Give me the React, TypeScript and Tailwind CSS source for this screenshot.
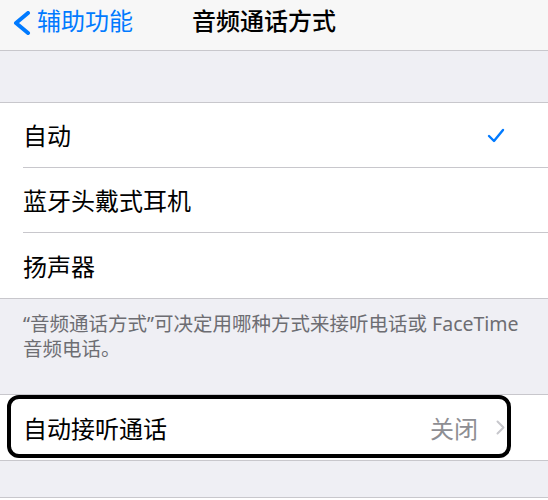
import React from 'react';

const font = { fontFamily: '"Noto Sans CJK SC", "Noto Sans", sans-serif' };
const footerFont = { fontFamily: '"Noto Sans", "Noto Sans CJK SC", sans-serif' };

const Check = () => (
  <svg width="18" height="15" viewBox="0 0 18 15" fill="none">
    <path d="M2 8 L7 13 L16 2" stroke="#007aff" strokeWidth="2.4" strokeLinecap="round" strokeLinejoin="round" />
  </svg>
);

const App: React.FC = () => {
  const options = [
    { label: '自动', checked: true },
    { label: '蓝牙头戴式耳机', checked: false },
    { label: '扬声器', checked: false },
  ];

  return (
    <div className="w-[548px] h-[500px] overflow-hidden bg-[#efeff4]" style={font}>
      {/* Nav bar */}
      <div className="h-[51px] bg-[#f7f7f7] border-b border-[#c8c7cc] flex items-start pt-[5px] pl-[12px]">
        <div className="flex items-center text-[#007aff]">
          <svg className="mt-[6px]" width="20" height="24" viewBox="0 0 20 24" fill="none">
            <path d="M16 2 L4 12 L16 22" stroke="#007aff" strokeWidth="4" strokeLinecap="round" strokeLinejoin="round" />
          </svg>
          <span className="ml-[5px] text-[24px] leading-[30px]">辅助功能</span>
        </div>
        <div className="ml-[59px] text-[24px] leading-[30px] text-black font-medium">音频通话方式</div>
      </div>

      <div className="h-[51px]" />

      {/* Options */}
      <div className="bg-white border-y border-[#c8c7cc]">
        {options.map((o, i) => (
          <div key={o.label} className="pl-[23px]">
            <div
              className={`h-[65px] flex items-center justify-between pr-[43px] ${
                i < options.length - 1 ? 'border-b border-[#c8c7cc]' : ''
              }`}
            >
              <span className="text-[24px] text-black">{o.label}</span>
              {o.checked && <Check />}
            </div>
          </div>
        ))}
      </div>

      {/* Footer */}
      <div className="pl-[23px] pr-[16px] pt-[12px] h-[95px] text-[19.5px] leading-[25px] text-[#6d6d72]" style={footerFont}>
        “音频通话方式”可决定用哪种方式来接听电话或 FaceTime 音频电话。
      </div>

      {/* Auto answer */}
      <div className="relative bg-white border-y border-[#c8c7cc]">
        <div className="h-[65px] flex items-center justify-between pl-[23px] pr-[43px]">
          <span className="text-[24px] text-black">自动接听通话</span>
          <div className="flex items-center">
            <span className="text-[24px] text-[#8e8e93]">关闭</span>
            <svg className="ml-[18px]" width="9" height="15" viewBox="0 0 9 15" fill="none">
              <path d="M1.5 1.5 L7.5 7.5 L1.5 13.5" stroke="#c7c7cc" strokeWidth="2" strokeLinecap="round" strokeLinejoin="round" />
            </svg>
          </div>
        </div>
        <div className="absolute left-[7px] top-0 w-[504px] h-[63px] border-[4px] border-black rounded-[12px]" />
      </div>

      <div className="h-[36px]" />
      <div className="bg-white border-t border-[#c8c7cc] h-[10px]" />
    </div>
  );
};

export default App;
